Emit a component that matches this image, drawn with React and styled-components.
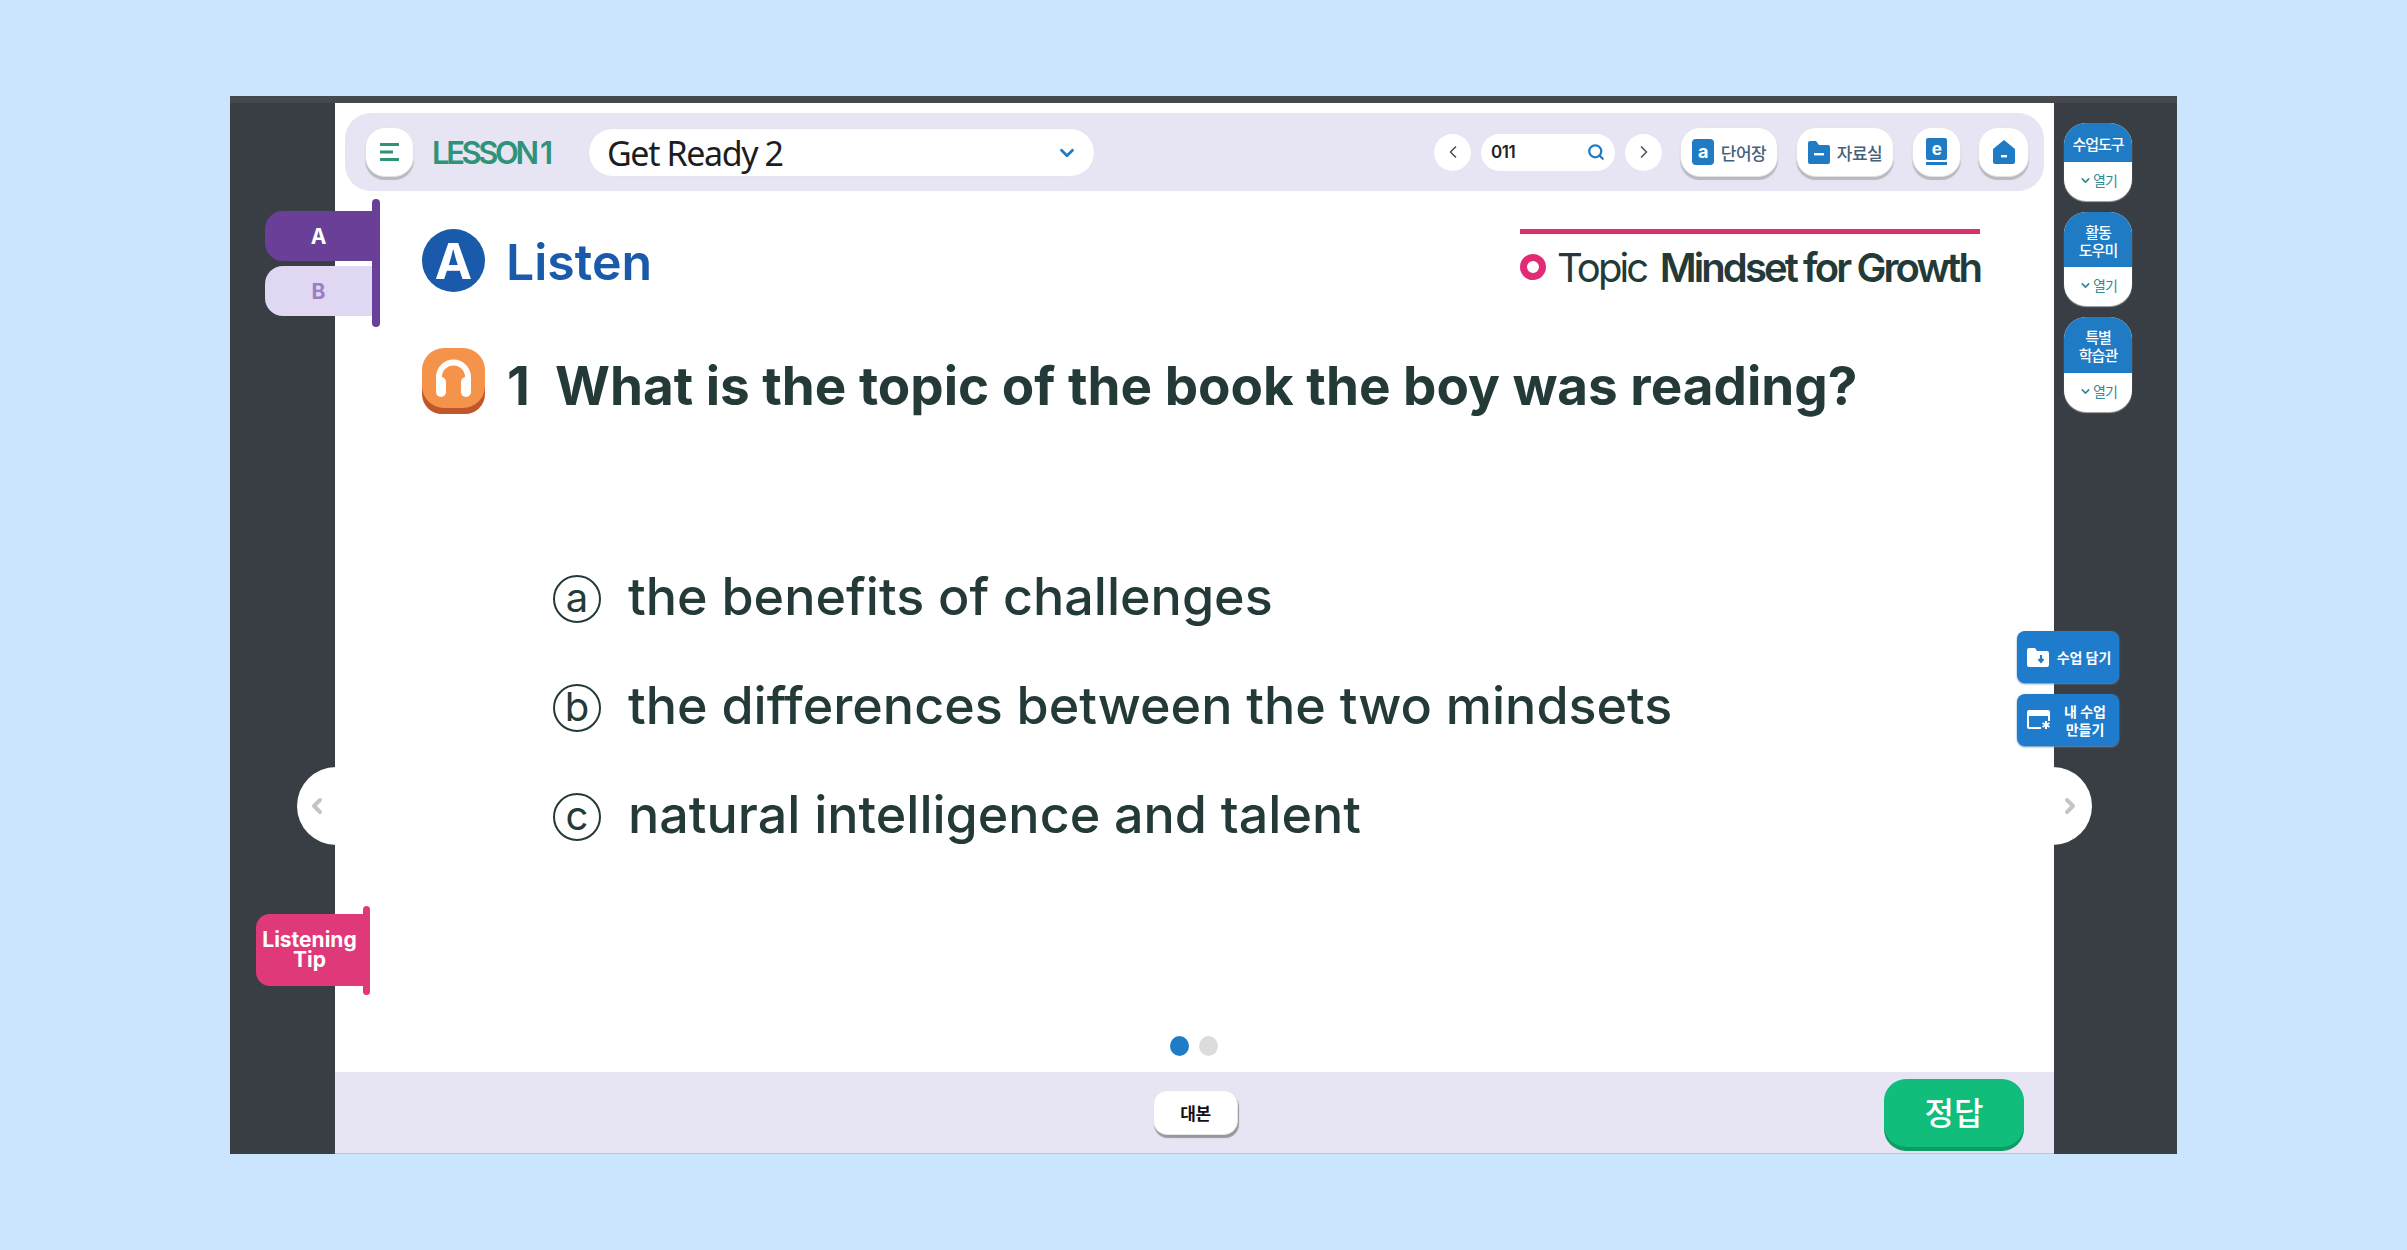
import React from "react";
import styled, { createGlobalStyle } from "styled-components";
import { ChevronDown, ChevronLeft, ChevronRight, Search } from "lucide-react";

const GlobalStyle = createGlobalStyle`
  body {
    margin: 0;
    background: #cce5ff;
    font-family: "Inter", "Noto Sans CJK KR", sans-serif;
  }
`;

const Page = styled.div`
  width: 2407px;
  height: 1250px;
  display: flex;
  align-items: center;
  justify-content: center;
`;

const Frame = styled.div`
  width: 1947px;
  height: 1058px;
  box-sizing: border-box;
  border-top: 7px solid #45484c;
  background: #383e44;
  display: grid;
  grid-template-columns: 105px 1719px 123px;
`;

const Panel = styled.main`
  grid-column: 2;
  position: relative;
  background: #fff;
  display: flex;
  flex-direction: column;
`;

const Header = styled.header`
  height: 78px;
  margin: 10px 10px 0;
  padding: 0 15px 0 20px;
  border-radius: 26px;
  background: #e7e4f4;
  display: flex;
  align-items: center;
`;

const RaisedButton = styled.button`
  height: 50px;
  width: ${({ $w }) => $w}px;
  margin-left: ${({ $ml }) => $ml || 0}px;
  padding: 0;
  border: 1px solid #e3e3e8;
  border-radius: 20px;
  background: #fff;
  box-shadow: 0 3px 1px #b9b9bd;
  display: flex;
  align-items: center;
  justify-content: center;
  gap: 7px;
  color: #46607c;
  font: 500 17px "Noto Sans CJK KR", sans-serif;
  letter-spacing: -0.5px;
`;

const LessonLabel = styled.div`
  width: 156px;
  margin-left: 18px;
  color: #2f9379;
  font-size: 31px;
  font-weight: 600;
  letter-spacing: -3.4px;
`;

const UnitSelect = styled.div`
  width: 507px;
  height: 49px;
  box-sizing: border-box;
  padding: 2px 16px 0 18px;
  border: 1px solid #e3e2ee;
  border-radius: 25px;
  background: #fff;
  display: flex;
  align-items: center;
  justify-content: space-between;
  color: #1d1d1d;
  font: 400 34px "Noto Sans", sans-serif;
  letter-spacing: -1.4px;
`;

const PageNav = styled.div`
  margin-left: auto;
  display: flex;
  align-items: center;
  gap: 10px;
  margin-right: 18px;
`;

const RoundButton = styled.div`
  width: 37px;
  height: 37px;
  border-radius: 50%;
  background: #fff;
  color: #555;
  display: flex;
  align-items: center;
  justify-content: center;
`;

const PageInput = styled.div`
  width: 134px;
  height: 37px;
  box-sizing: border-box;
  padding: 0 10px;
  border-radius: 19px;
  background: #fff;
  display: flex;
  align-items: center;
  justify-content: space-between;
  color: #222;
  font-size: 17px;
  font-weight: 600;
  letter-spacing: -0.5px;
`;

const Content = styled.section`
  flex: 1;
  padding: 38px 74px 0 87px;
  display: flex;
  flex-direction: column;
`;

const TitleRow = styled.div`
  height: 63px;
  display: flex;
  justify-content: space-between;
`;

const TitleLeft = styled.div`
  display: flex;
  align-items: center;
  gap: 21px;
`;

const LetterBadge = styled.div`
  width: 63px;
  height: 63px;
  border-radius: 50%;
  background: #1a5aaa;
  color: #fff;
  font-size: 50px;
  font-weight: 700;
  display: flex;
  align-items: center;
  justify-content: center;
`;

const TitleText = styled.h1`
  margin: 2px 0 0;
  color: #1a5aaa;
  font-size: 50px;
  font-weight: 600;
`;

const TopicBox = styled.div`
  width: 460px;
  height: 63px;
  box-sizing: border-box;
  border-top: 5px solid #dc2f70;
  padding-top: 8px;
  display: flex;
  align-items: center;
  color: #233a38;
  font-size: 40px;
  letter-spacing: -2.9px;
  white-space: nowrap;
`;

const TopicDot = styled.span`
  flex: none;
  width: 26px;
  height: 26px;
  box-sizing: border-box;
  border: 7px solid #e32a75;
  border-radius: 50%;
  margin-right: 11px;
`;

const TopicTitle = styled.strong`
  margin-left: auto;
  font-weight: 600;
`;

const QuestionRow = styled.div`
  margin-top: 56px;
  height: 66px;
  display: flex;
  align-items: center;
  gap: 22px;
`;

const QuestionText = styled.h2`
  margin: 0;
  padding-top: 10px;
  color: #233a38;
  font-size: 53px;
  font-weight: 700;
  white-space: pre;
`;

const OptionList = styled.ol`
  list-style: none;
  margin: 161px 0 0;
  padding: 0 0 0 131px;
  display: flex;
  flex-direction: column;
  gap: 61px;
`;

const Option = styled.li`
  height: 48px;
  display: flex;
  align-items: center;
  gap: 27px;
  color: #233a38;
  font-size: 52px;
  font-weight: 500;
`;

const OptionText = styled.span`
  margin-bottom: 6px;
`;

const OptionMark = styled.span`
  flex: none;
  width: 48px;
  height: 48px;
  box-sizing: border-box;
  border: 2px solid #233a38;
  border-radius: 50%;
  display: flex;
  align-items: center;
  justify-content: center;
  font-size: 40px;
  font-weight: 400;
  line-height: 1;
  padding-bottom: 3px;
`;

const Dots = styled.div`
  margin: auto 0 16px 748px;
  display: flex;
  gap: 10px;
`;

const Dot = styled.span`
  width: 19px;
  height: 20px;
  border-radius: 50%;
  background: ${({ $active }) => ($active ? "#1f7dc6" : "#dcdcdc")};
`;

const Footer = styled.footer`
  height: 82px;
  box-sizing: border-box;
  border-bottom: 1px solid #c5c4cd;
  background: #e7e4f4;
  display: flex;
  align-items: center;
  padding: 0 30px 0 818px;
`;

const ScriptButton = styled.button`
  width: 85px;
  height: 45px;
  padding: 0;
  border: 1px solid #e5e5e5;
  border-radius: 14px;
  background: #fff;
  box-shadow: 1px 3px 1px #98989c;
  color: #111;
  font: 700 17px "Noto Sans CJK KR", sans-serif;
  letter-spacing: -0.5px;
`;

const AnswerButton = styled.button`
  margin-left: auto;
  width: 140px;
  height: 68px;
  padding: 0 0 3px;
  border: 0;
  border-radius: 22px;
  background: #10bd7a;
  box-shadow: 0 4px 0 #0c9c64;
  color: #fff;
  font: 500 32px "Noto Sans CJK KR", sans-serif;
`;

const ToolColumn = styled.aside`
  padding: 20px 0 0 10px;
  display: flex;
  flex-direction: column;
  gap: 11px;
`;

const ToolCard = styled.div`
  width: 68px;
  border-radius: 22px;
  overflow: hidden;
  background: #fff;
  box-shadow: 0 1px 1px #aaa;
  font-family: "Noto Sans CJK KR", sans-serif;
  letter-spacing: -1px;
  text-align: center;
`;

const ToolTitle = styled.div`
  height: ${({ $h }) => $h}px;
  background: #1f7bc4;
  color: #fff;
  font-size: 15px;
  font-weight: 500;
  line-height: 18px;
  display: flex;
  align-items: center;
  justify-content: center;
  padding-top: 2px;
  box-sizing: border-box;
`;

const ToolOpen = styled.div`
  height: 39px;
  padding-bottom: 3px;
  box-sizing: border-box;
  color: #2f8a94;
  font-size: 14px;
  display: flex;
  align-items: center;
  justify-content: center;
  gap: 1px;
`;

const SideTabs = styled.nav`
  position: absolute;
  left: -70px;
  top: 96px;
  width: 115px;
  height: 128px;
  box-sizing: border-box;
  padding-top: 12px;
  display: flex;
  flex-direction: column;
  gap: 5px;
  &::after {
    content: "";
    position: absolute;
    right: 0;
    top: 0;
    width: 8px;
    height: 100%;
    border-radius: 4px;
    background: #693f98;
  }
`;

const SideTab = styled.div`
  width: 110px;
  height: 50px;
  padding-right: 3px;
  box-sizing: border-box;
  border-radius: 18px 0 0 18px;
  background: ${({ $active }) => ($active ? "#693f98" : "#e0d8f2")};
  color: ${({ $active }) => ($active ? "#fff" : "#9b7fc6")};
  font-size: 21px;
  font-weight: 700;
  display: flex;
  align-items: center;
  justify-content: center;
`;

const TipFlag = styled.div`
  position: absolute;
  left: -79px;
  top: 811px;
  width: 107px;
  height: 72px;
  border-radius: 14px 0 0 14px;
  background: #e0397a;
  color: #fff;
  font-size: 21px;
  font-weight: 700;
  line-height: 20px;
  text-align: center;
  display: flex;
  align-items: center;
  justify-content: center;
  &::after {
    content: "";
    position: absolute;
    right: -7px;
    top: -8px;
    width: 7px;
    height: 89px;
    border-radius: 4px;
    background: #e0397a;
  }
`;

const SideArrow = styled.div`
  position: absolute;
  top: 664px;
  ${({ $side }) =>
    $side === "left"
      ? "left: -38px; padding-left: 1px;"
      : "right: -38px; padding-right: 5px;"}
  width: 39px;
  height: 78px;
  box-sizing: border-box;
  background: #fff;
  border-radius: ${({ $side }) => ($side === "left" ? "39px 0 0 39px" : "0 39px 39px 0")};
  color: #c4c4c4;
  display: flex;
  align-items: center;
  justify-content: center;
`;

const LessonActions = styled.div`
  position: absolute;
  left: 1682px;
  top: 528px;
  display: flex;
  flex-direction: column;
  gap: 11px;
`;

const ActionButton = styled.button`
  width: 102px;
  height: 52px;
  padding: 0 0 0 10px;
  border: 0;
  border-radius: 8px;
  background: #1f7bcb;
  box-shadow: 0 1px 2px #5a8fbf;
  color: #fff;
  font: 600 14px/18px "Noto Sans CJK KR", sans-serif;
  display: flex;
  align-items: center;
  gap: 6px;
`;

const ActionLabel = styled.span`
  flex: 1;
  text-align: center;
  padding-right: 6px;
`;

const MenuIcon = () => (
  <svg width="22" height="20" viewBox="0 0 22 20" fill="#2f9379">
    <rect x="1" y="1" width="19" height="3" />
    <rect x="1" y="8.5" width="13" height="3" />
    <rect x="1" y="16" width="19" height="3" />
  </svg>
);

const WordIcon = () => (
  <svg width="22" height="26" viewBox="0 0 22 26">
    <rect width="22" height="26" rx="4" fill="#1f7bc4" />
    <text x="11" y="19" fill="#fff" fontSize="18" fontWeight="700" textAnchor="middle" fontFamily="Inter">a</text>
  </svg>
);

const FolderIcon = () => (
  <svg width="22" height="24" viewBox="0 0 22 24">
    <path d="M0 3a2 2 0 0 1 2-2h6l3 4h9a2 2 0 0 1 2 2v15a2 2 0 0 1-2 2H2a2 2 0 0 1-2-2z" fill="#1f7bc4" />
    <rect x="6" y="13" width="10" height="2.4" fill="#fff" />
  </svg>
);

const BookIcon = () => (
  <svg width="21" height="28" viewBox="0 0 21 28">
    <rect width="21" height="22" rx="2" fill="#1f7bc4" />
    <rect y="24" width="21" height="3" fill="#1f7bc4" />
    <text x="10.5" y="17" fill="#fff" fontSize="17" fontWeight="700" textAnchor="middle" fontFamily="Inter">e</text>
  </svg>
);

const HomeIcon = () => (
  <svg width="24" height="26" viewBox="0 0 24 26">
    <path d="M12 1 23 10v13a2 2 0 0 1-2 2H3a2 2 0 0 1-2-2V10z" fill="#1f7bc4" />
    <rect x="9" y="16" width="6" height="2.4" fill="#fff" />
  </svg>
);

const HeadsetIcon = () => (
  <svg width="63" height="66" viewBox="0 0 63 66">
    <rect y="6" width="63" height="60" rx="20" fill="#c0562b" />
    <rect width="63" height="60" rx="22" fill="#f6934a" />
    <path d="M17 36V29a14.500 14.500 0 0 1 29 0v7" fill="none" stroke="#fff" strokeWidth="6" />
    <rect x="14" y="29" width="10" height="20" rx="5" fill="#fff" />
    <rect x="39" y="29" width="10" height="20" rx="5" fill="#fff" />
  </svg>
);

const SaveIcon = () => (
  <svg width="22" height="19" viewBox="0 0 22 19">
    <path d="M0 2a2 2 0 0 1 2-2h6l2 3h10a2 2 0 0 1 2 2v12a2 2 0 0 1-2 2H2a2 2 0 0 1-2-2z" fill="#fff" />
    <path d="M14 7v6M11.500 11l2.500 3 2.500-3" fill="none" stroke="#1f7bcb" strokeWidth="2" />
  </svg>
);

const WindowIcon = () => (
  <svg width="24" height="20" viewBox="0 0 24 20" fill="none">
    <path d="M14 18H2a1 1 0 0 1-1-1V2a1 1 0 0 1 1-1h19a1 1 0 0 1 1 1v9" stroke="#fff" strokeWidth="2" />
    <rect x="1" y="1" width="21" height="5" fill="#fff" />
    <path d="M19 11v8M15.500 13l7 4M22.500 13l-7 4" stroke="#fff" strokeWidth="2" />
  </svg>
);

const tools = [
  { lines: ["수업도구"], height: 39 },
  { lines: ["활동", "도우미"], height: 55 },
  { lines: ["특별", "학습관"], height: 56 },
];

const options = [
  ["a", "the benefits of challenges"],
  ["b", "the differences between the two mindsets"],
  ["c", "natural intelligence and talent"],
];

export default function App() {
  return (
    <Page>
      <GlobalStyle />
      <Frame>
        <Panel>
          <Header>
            <RaisedButton $w={49}>
              <MenuIcon />
            </RaisedButton>
            <LessonLabel>LESSON 1</LessonLabel>
            <UnitSelect>
              Get Ready 2
              <ChevronDown size={22} color="#1f7bc4" strokeWidth={3} />
            </UnitSelect>
            <PageNav>
              <RoundButton>
                <ChevronLeft size={20} />
              </RoundButton>
              <PageInput>
                011
                <Search size={18} color="#1f7bc4" strokeWidth={3} />
              </PageInput>
              <RoundButton>
                <ChevronRight size={20} />
              </RoundButton>
            </PageNav>
            <RaisedButton $w={98}>
              <WordIcon />
              단어장
            </RaisedButton>
            <RaisedButton $w={98} $ml={18}>
              <FolderIcon />
              자료실
            </RaisedButton>
            <RaisedButton $w={49} $ml={18}>
              <BookIcon />
            </RaisedButton>
            <RaisedButton $w={51} $ml={17}>
              <HomeIcon />
            </RaisedButton>
          </Header>

          <Content>
            <TitleRow>
              <TitleLeft>
                <LetterBadge>A</LetterBadge>
                <TitleText>Listen</TitleText>
              </TitleLeft>
              <TopicBox>
                <TopicDot />
                Topic
                <TopicTitle>Mindset for Growth</TopicTitle>
              </TopicBox>
            </TitleRow>
            <QuestionRow>
              <HeadsetIcon />
              <QuestionText>1  What is the topic of the book the boy was reading?</QuestionText>
            </QuestionRow>
            <OptionList>
              {options.map(([mark, text]) => (
                <Option key={mark}>
                  <OptionMark>{mark}</OptionMark>
                  <OptionText>{text}</OptionText>
                </Option>
              ))}
            </OptionList>
            <Dots>
              <Dot $active />
              <Dot />
            </Dots>
          </Content>

          <Footer>
            <ScriptButton>대본</ScriptButton>
            <AnswerButton>정답</AnswerButton>
          </Footer>

          <SideTabs>
            <SideTab $active>A</SideTab>
            <SideTab>B</SideTab>
          </SideTabs>
          <TipFlag>
            Listening
            <br />
            Tip
          </TipFlag>
          <SideArrow $side="left">
            <ChevronLeft size={24} strokeWidth={4} />
          </SideArrow>
          <SideArrow $side="right">
            <ChevronRight size={24} strokeWidth={4} />
          </SideArrow>
          <LessonActions>
            <ActionButton>
              <SaveIcon />
              <ActionLabel>수업 담기</ActionLabel>
            </ActionButton>
            <ActionButton>
              <WindowIcon />
              <ActionLabel>
                내 수업
                <br />
                만들기
              </ActionLabel>
            </ActionButton>
          </LessonActions>
        </Panel>

        <ToolColumn>
          {tools.map((tool) => (
            <ToolCard key={tool.lines[0]}>
              <ToolTitle $h={tool.height}>
                <div>
                  {tool.lines.map((line) => (
                    <div key={line}>{line}</div>
                  ))}
                </div>
              </ToolTitle>
              <ToolOpen>
                <ChevronDown size={13} strokeWidth={3} />
                열기
              </ToolOpen>
            </ToolCard>
          ))}
        </ToolColumn>
      </Frame>
    </Page>
  );
}
